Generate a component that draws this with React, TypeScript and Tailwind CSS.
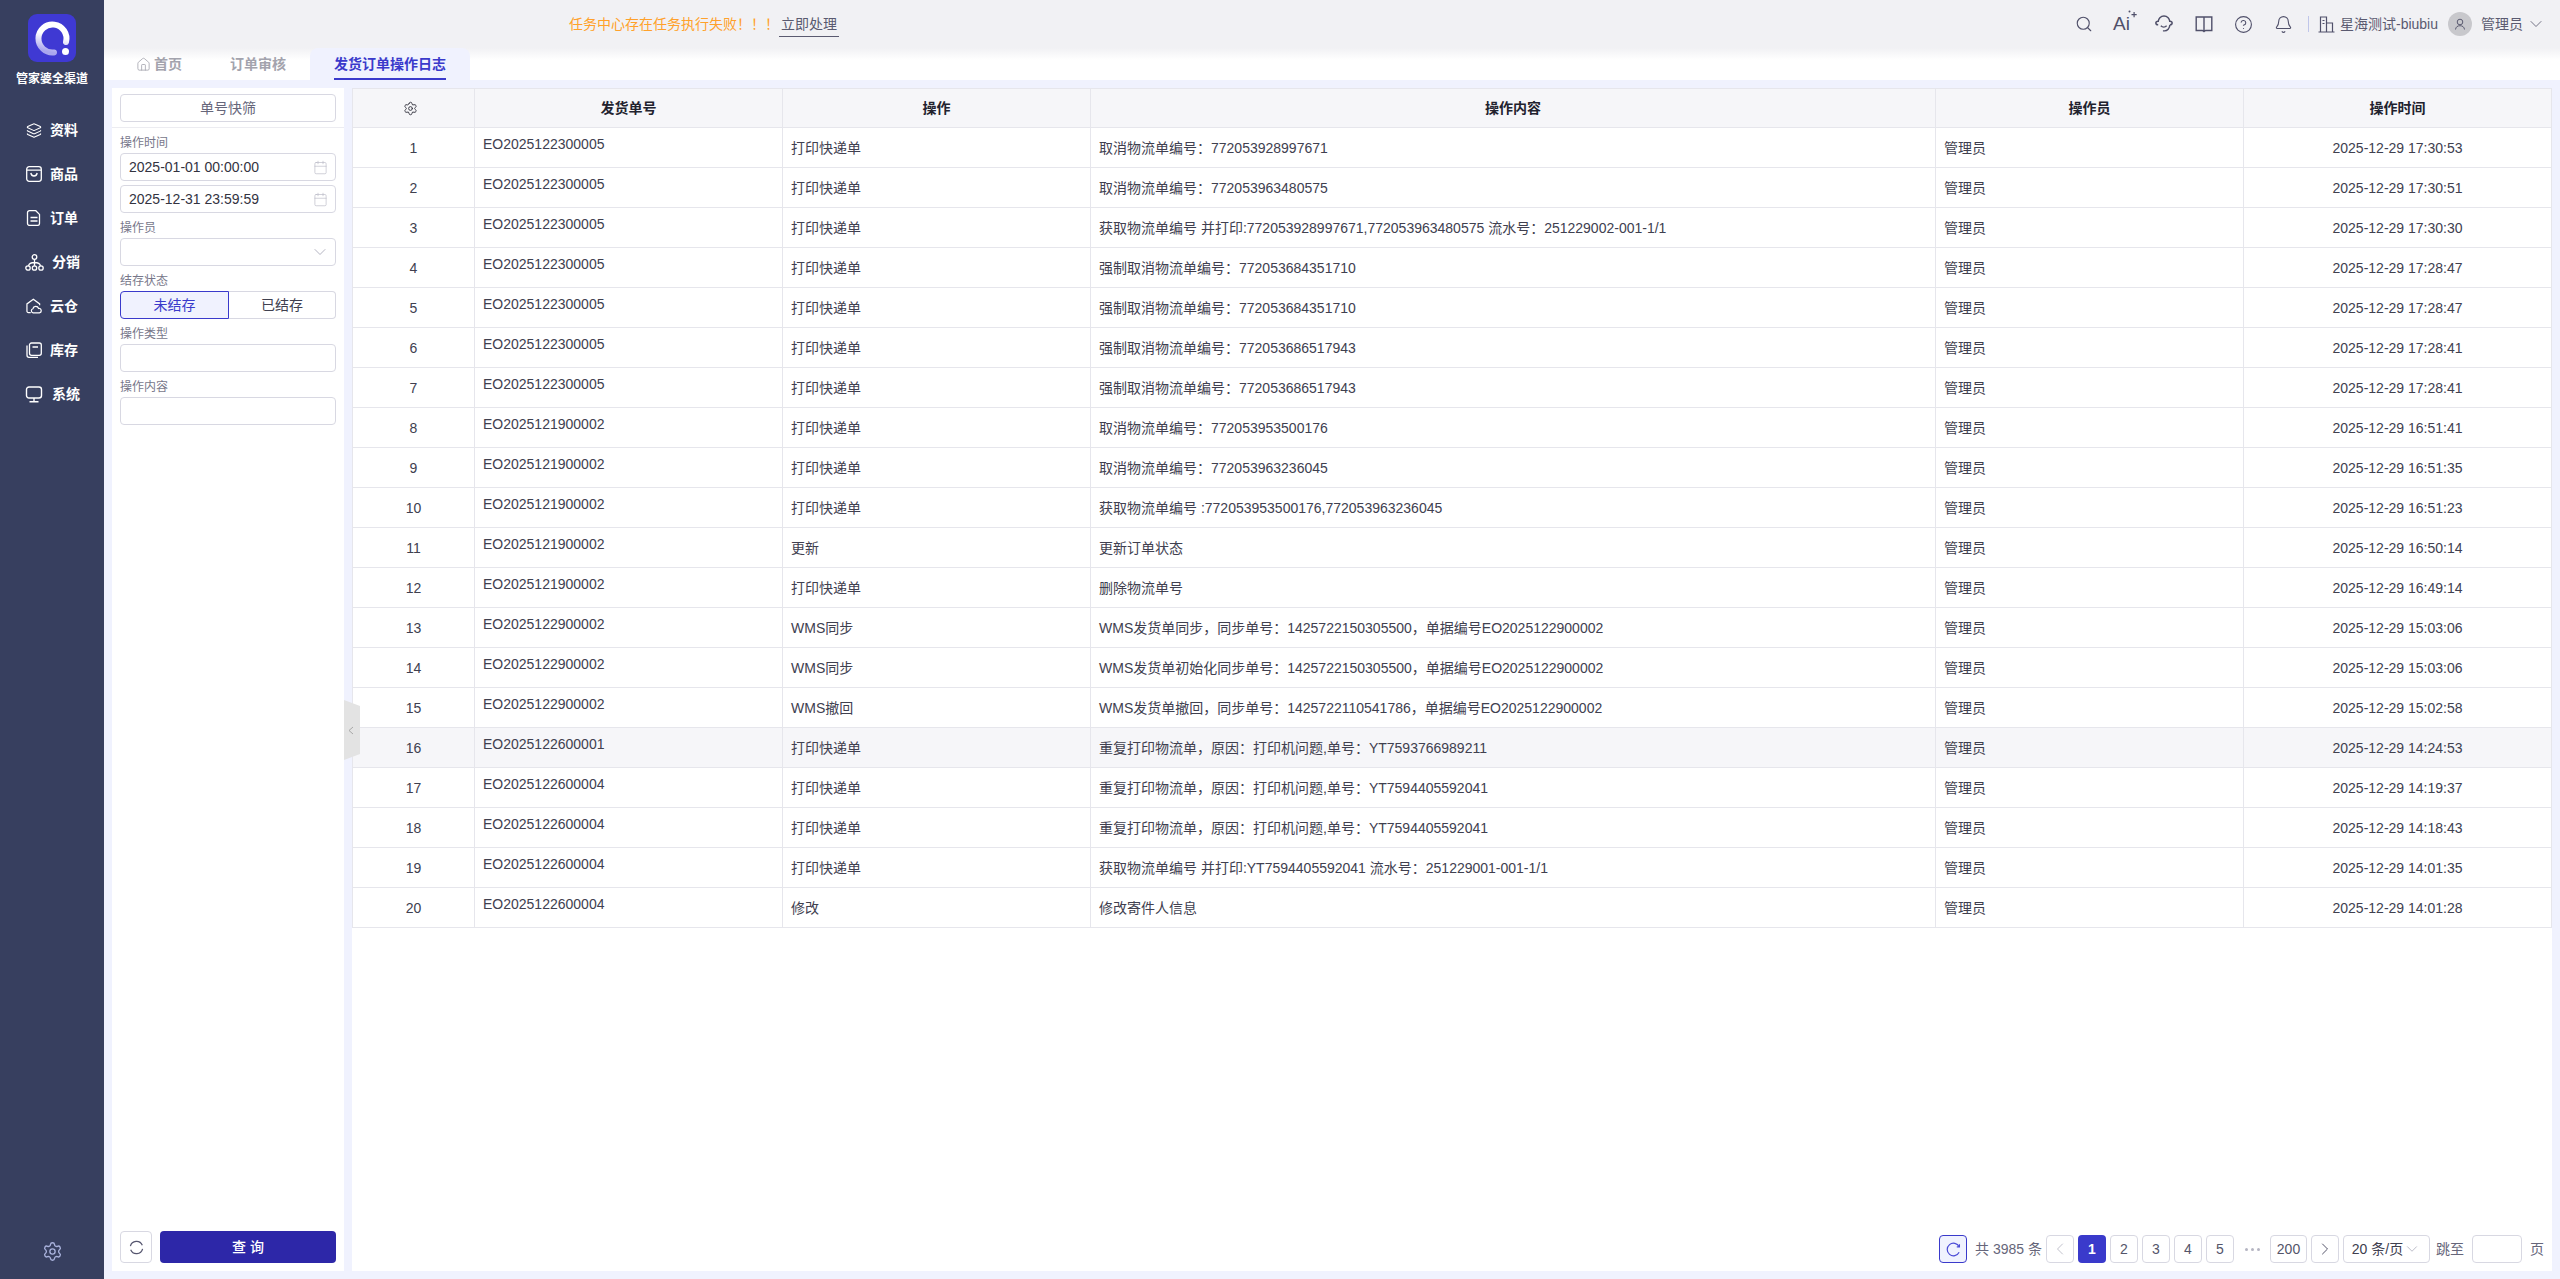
import { Bell, Calendar, ChevronDown, ChevronLeft, ChevronRight, CircleHelp, House, Layers, Search, Settings } from "lucide-react"

const menuItems = [
  { name: "资料", icon: "data" },
  { name: "商品", icon: "goods" },
  { name: "订单", icon: "order" },
  { name: "分销", icon: "dist" },
  { name: "云仓", icon: "cloud" },
  { name: "库存", icon: "stock" },
  { name: "系统", icon: "system" },
]

const rows = [
  ["EO2025122300005", "打印快递单", "取消物流单编号：772053928997671", "2025-12-29 17:30:53"],
  ["EO2025122300005", "打印快递单", "取消物流单编号：772053963480575", "2025-12-29 17:30:51"],
  ["EO2025122300005", "打印快递单", "获取物流单编号 并打印:772053928997671,772053963480575 流水号：251229002-001-1/1", "2025-12-29 17:30:30"],
  ["EO2025122300005", "打印快递单", "强制取消物流单编号：772053684351710", "2025-12-29 17:28:47"],
  ["EO2025122300005", "打印快递单", "强制取消物流单编号：772053684351710", "2025-12-29 17:28:47"],
  ["EO2025122300005", "打印快递单", "强制取消物流单编号：772053686517943", "2025-12-29 17:28:41"],
  ["EO2025122300005", "打印快递单", "强制取消物流单编号：772053686517943", "2025-12-29 17:28:41"],
  ["EO2025121900002", "打印快递单", "取消物流单编号：772053953500176", "2025-12-29 16:51:41"],
  ["EO2025121900002", "打印快递单", "取消物流单编号：772053963236045", "2025-12-29 16:51:35"],
  ["EO2025121900002", "打印快递单", "获取物流单编号 :772053953500176,772053963236045", "2025-12-29 16:51:23"],
  ["EO2025121900002", "更新", "更新订单状态", "2025-12-29 16:50:14"],
  ["EO2025121900002", "打印快递单", "删除物流单号", "2025-12-29 16:49:14"],
  ["EO2025122900002", "WMS同步", "WMS发货单同步，同步单号：1425722150305500，单据编号EO2025122900002", "2025-12-29 15:03:06"],
  ["EO2025122900002", "WMS同步", "WMS发货单初始化同步单号：1425722150305500，单据编号EO2025122900002", "2025-12-29 15:03:06"],
  ["EO2025122900002", "WMS撤回", "WMS发货单撤回，同步单号：1425722110541786，单据编号EO2025122900002", "2025-12-29 15:02:58"],
  ["EO2025122600001", "打印快递单", "重复打印物流单，原因：打印机问题,单号：YT7593766989211", "2025-12-29 14:24:53"],
  ["EO2025122600004", "打印快递单", "重复打印物流单，原因：打印机问题,单号：YT7594405592041", "2025-12-29 14:19:37"],
  ["EO2025122600004", "打印快递单", "重复打印物流单，原因：打印机问题,单号：YT7594405592041", "2025-12-29 14:18:43"],
  ["EO2025122600004", "打印快递单", "获取物流单编号 并打印:YT7594405592041 流水号：251229001-001-1/1", "2025-12-29 14:01:35"],
  ["EO2025122600004", "修改", "修改寄件人信息", "2025-12-29 14:01:28"],
]

function Logo() {
  return (
    <svg width="48" height="48" viewBox="0 0 48 48">
      <defs>
        <linearGradient id="ring" x1="0.7" y1="0.1" x2="0.5" y2="1">
          <stop offset="0.35" stopColor="#ffffff" />
          <stop offset="1" stopColor="#aaa6ee" />
        </linearGradient>
      </defs>
      <rect width="48" height="48" rx="9" fill="#3f39d3" />
      <path d="M38 28 A14 14 0 1 0 26 38.4" fill="none" stroke="url(#ring)" strokeWidth="6" strokeLinecap="round" />
      <circle cx="37.5" cy="37.5" r="3.5" fill="#fff" />
    </svg>
  )
}

function MenuIcon({ name }: { name: string }) {
  if (name === "data") return <Layers size={17} strokeWidth={1.6} />
  if (name === "goods")
    return (
      <svg width="16" height="16" viewBox="0 0 16 16" fill="none" stroke="currentColor" strokeWidth="1.3">
        <rect x="0.7" y="0.7" width="14.6" height="14.6" rx="2.5" />
        <path d="M1 4.2h14M4.8 7c.4 2 1.6 3 3.2 3s2.8-1 3.2-3" />
      </svg>
    )
  if (name === "order")
    return (
      <svg width="16" height="16" viewBox="0 0 16 16" fill="none" stroke="currentColor" strokeWidth="1.3">
        <path d="M3.5 .7h6.3l3.7 3.7v9a2 2 0 0 1-2 2H3.5a2 2 0 0 1-2-2V2.700a2 2 0 0 1 2-2Z" />
        <path d="M4.5 7.5h7M4.5 11h7" />
      </svg>
    )
  if (name === "dist")
    return (
      <svg width="19" height="17" viewBox="0 0 19 17" fill="none" stroke="currentColor" strokeWidth="1.3">
        <circle cx="9.5" cy="3" r="2.3" />
        <circle cx="3" cy="14" r="2.2" />
        <circle cx="9.5" cy="14" r="2.2" />
        <circle cx="16" cy="14" r="2.2" />
        <path d="M9.5 5.3v6.4M3.5 11.800c.5-2.500 2.500-3.300 6-3.300s5.500.8 6 3.300" />
      </svg>
    )
  if (name === "cloud")
    return (
      <svg width="17" height="16" viewBox="0 0 17 16" fill="none" stroke="currentColor" strokeWidth="1.3">
        <path d="M5 15H2.500a1.500 1.500 0 0 1-1.500-1.500V5.800L7.800 .8l6.700 5v1.500" />
        <path d="M7.500 15.200a2.200 2.200 0 0 1-.2-4.300 3.200 3.200 0 0 1 6.100-.3 2.300 2.300 0 0 1 .8 4.600Z" />
      </svg>
    )
  if (name === "stock")
    return (
      <svg width="16" height="16" viewBox="0 0 16 16" fill="none" stroke="currentColor" strokeWidth="1.3">
        <rect x="3.500" y="1" width="11.800" height="12.300" rx="2" />
        <path d="M6.500 5h5.500M1 3.500v9.800a2 2 0 0 0 2 2h9" />
      </svg>
    )
  return (
    <svg width="19" height="17" viewBox="0 0 19 17" fill="none" stroke="currentColor" strokeWidth="1.4">
      <rect x="1.500" y="1" width="15" height="11" rx="2.500" />
      <path d="M9 12v3.500M4.500 15.700h9" />
    </svg>
  )
}

function Sidebar() {
  return (
    <aside className="flex w-[104px] shrink-0 flex-col bg-[#373f5f] text-white">
      <div className="flex flex-col items-center pt-[14px]">
        <Logo />
        <div className="mt-[9px] text-[12px] leading-4 font-bold">管家婆全渠道</div>
      </div>
      <nav className="mt-[21px] flex flex-col">
        {menuItems.map((item) => (
          <div key={item.name} className="flex h-[44px] items-center">
            {item.icon === "dist" || item.icon === "system" ? (
              <div className="ml-[25px] flex w-[19px] justify-center"><MenuIcon name={item.icon} /></div>
            ) : (
              <div className="ml-[26px] flex w-[16px] justify-center"><MenuIcon name={item.icon} /></div>
            )}
            <span className="ml-[8px] text-[14px] leading-5 font-bold">{item.name}</span>
          </div>
        ))}
      </nav>
      <div className="mt-auto flex justify-center pb-[17px]">
        <Settings size={21} strokeWidth={1.5} className="text-[#aab3dd]" />
      </div>
    </aside>
  )
}

function TopBar() {
  return (
    <header className="flex h-[48px] shrink-0 items-center bg-[#f1f1f4] pl-[465px] text-[14px] leading-5 text-[#5a5a70]">
      <span className="text-[#ffa12b]">任务中心存在任务执行失败！！！</span>
      <span className="border-b border-[#5a5a70] px-[2px] pb-[2px] pt-[3px]">立即处理</span>
      <div className="ml-auto flex items-center pr-[17px]">
        <div className="flex w-[40px] justify-center"><Search size={18} strokeWidth={1.5} className="text-[#50506a]" /></div>
        <div className="flex w-[40px] justify-center text-[#50506a]">
          <span className="relative pr-[5px] text-[19px] leading-5">
            Ai
            <svg className="absolute -top-[4px] -right-[2px]" width="10" height="10" viewBox="0 0 10 10" fill="currentColor">
              <path d="M6.500 2h1.200v2h2v1.200h-2v2H6.500v-2h-2V4h2Z" />
              <circle cx="2.500" cy="1.500" r="1" />
            </svg>
          </span>
        </div>
        <div className="flex w-[40px] justify-center text-[#50506a]">
          <svg width="18" height="18" viewBox="0 0 17 17" fill="none" stroke="currentColor" strokeWidth="1.4">
            <path d="M3 6.500a5.500 5.500 0 0 1 11 0" />
            <path d="M3 5.800c-1.500 0-2.200 1-2.200 1.800s.7 1.700 2.200 1.700M14 5.800c1.500 0 2.200 1 2.200 1.800s-.7 1.700-2.200 1.700" />
            <path d="M14 9.500c0 3-2.500 5.500-5 5.500H7.500M5.500 10.200c1.500 1.500 4 1.500 5.500 0" />
          </svg>
        </div>
        <div className="flex w-[40px] justify-center text-[#50506a]">
          <svg width="18" height="17" viewBox="0 0 17 17" fill="none" stroke="currentColor" strokeWidth="1.4">
            <path d="M.7 1h15.600v13.500h-6c-.8 0-1.300.5-1.800 1-.5-.5-1-1-1.800-1h-6ZM8.500 1v14" />
          </svg>
        </div>
        <div className="flex w-[40px] justify-center"><CircleHelp size={19} strokeWidth={1.4} className="text-[#50506a]" /></div>
        <div className="flex w-[40px] justify-center"><Bell size={19} strokeWidth={1.4} className="text-[#50506a]" /></div>
        <div className="ml-[4px] h-[16px] w-px bg-[#c0c6ea]" />
        <svg className="ml-[9px] text-[#50506a]" width="17" height="17" viewBox="0 0 17 17" fill="none" stroke="currentColor" strokeWidth="1.2">
          <path d="M.5 16h16M2.500 16V1h6v15M8.500 7h6v9M4.500 4.500h2M4.500 7.500h2" />
        </svg>
        <span className="ml-[5px]">星海测试-biubiu</span>
        <div className="ml-[10px] flex h-[24px] w-[24px] items-center justify-center rounded-full bg-[#c8c8cc]">
          <svg width="12" height="12" viewBox="0 0 12 12" fill="none" stroke="#5a5a70" strokeWidth="1">
            <circle cx="6" cy="4" r="2.800" />
            <path d="M1.500 11.500c.3-2.500 2-3.800 4.500-3.800s4.200 1.300 4.500 3.800" />
          </svg>
        </div>
        <span className="ml-[9px]">管理员</span>
        <ChevronDown size={20} strokeWidth={1} className="ml-[3px] -mr-[3px]" />
      </div>
    </header>
  )
}

function TabBar() {
  return (
    <div className="flex h-[32px] shrink-0 bg-[linear-gradient(#f1f1f4,#ffffff_12px)] pl-[8px] text-[14px] leading-5 font-bold text-[#a3a3ad]">
      <div className="flex items-center gap-[3px] px-[24px]">
        <House size={15} strokeWidth={1.3} />
        <span>首页</span>
      </div>
      <div className="flex items-center px-[24px]">订单审核</div>
      <div className="flex rounded-t-[8px] bg-[#f0f2fe] px-[24px] text-[#3a3acb]">
        <div className="flex items-center border-b-2 border-[#3a3acb] pt-[2px]">发货订单操作日志</div>
      </div>
    </div>
  )
}

function Label({ text }: { text: string }) {
  return <div className="mb-[2px] text-[12px] leading-4 text-[#77778a]">{text}</div>
}

function DateInput({ value }: { value: string }) {
  return (
    <div className="flex h-[28px] items-center justify-between rounded-[4px] border border-[#d8d8e2] bg-white pl-[8px] pr-[7px] text-[14px] text-[#33333f]">
      <span>{value}</span>
      <Calendar size={15} strokeWidth={1} className="text-[#b5b5c2]" />
    </div>
  )
}

function FilterPanel() {
  return (
    <div className="relative flex w-[232px] shrink-0 flex-col bg-white">
      <div className="border-b border-[#ececf1] px-[8px] pb-[5px] pt-[6px]">
        <div className="flex h-[28px] items-center justify-center rounded-[4px] border border-[#d8d8e2] text-[14px] text-[#66667a]">单号快筛</div>
      </div>
      <div className="flex flex-col px-[8px] pt-[7px]">
        <Label text="操作时间" />
        <DateInput value="2025-01-01 00:00:00" />
        <div className="mt-[4px]"><DateInput value="2025-12-31 23:59:59" /></div>
        <div className="mt-[7px]"><Label text="操作员" /></div>
        <div className="flex h-[28px] items-center justify-end rounded-[4px] border border-[#d8d8e2] pr-[5px]">
          <ChevronDown size={20} strokeWidth={1} className="text-[#a5a5b5]" />
        </div>
        <div className="mt-[7px]"><Label text="结存状态" /></div>
        <div className="flex h-[28px] text-[14px]">
          <div className="flex w-[109px] items-center justify-center rounded-l-[4px] border border-[#3a3acb] bg-[#f0f2fe] text-[#3a3acb]">未结存</div>
          <div className="flex flex-1 items-center justify-center rounded-r-[4px] border border-l-0 border-[#d8d8e2] text-[#40404f]">已结存</div>
        </div>
        <div className="mt-[7px]"><Label text="操作类型" /></div>
        <div className="h-[28px] rounded-[4px] border border-[#d8d8e2]" />
        <div className="mt-[7px]"><Label text="操作内容" /></div>
        <div className="h-[28px] rounded-[4px] border border-[#d8d8e2]" />
      </div>
      <div className="mt-auto flex gap-[8px] px-[8px] pb-[8px]">
        <div className="flex h-[32px] w-[32px] items-center justify-center rounded-[4px] border border-[#d8d8e2]">
          <svg className="text-[#55556e]" width="15" height="15" viewBox="0 0 16 16" fill="none" stroke="currentColor" strokeWidth="1.3">
            <path d="M1.500 6.500A6.700 6.700 0 0 1 14.200 5.500M14.500 9.500A6.700 6.700 0 0 1 1.800 10.500" />
          </svg>
        </div>
        <div className="flex h-[32px] flex-1 items-center justify-center rounded-[4px] bg-[#2d27a8] text-[14px] font-medium text-white">查&nbsp;询</div>
      </div>
      <div className="absolute left-full top-[612px] z-10">
        <svg width="16" height="60" viewBox="0 0 16 60" className="block">
          <polygon points="0,0 16,6 16,54 0,60" fill="#e3e3e3" />
          <path d="M9 27l-4 3.500 4 3.500" fill="none" stroke="#a8a8a8" strokeWidth="1" />
        </svg>
      </div>
    </div>
  )
}

function LogTable() {
  const headCell = "border border-[#e6e6ec] bg-[#f6f6f9] text-center font-bold text-[#22222e]"
  const cell = "border border-[#e6e6ec] px-[8px]"
  return (
    <table className="w-full table-fixed border-collapse text-[14px] leading-5 text-[#40404f]">
      <colgroup>
        <col className="w-[122px]" />
        <col className="w-[308px]" />
        <col className="w-[308px]" />
        <col className="w-[845px]" />
        <col className="w-[308px]" />
        <col />
      </colgroup>
      <thead>
        <tr className="h-[39px]">
          <th className={headCell}>
            <Settings size={15} strokeWidth={1.5} className="mx-auto -translate-x-[3px] text-[#33333f]" />
          </th>
          <th className={headCell}>发货单号</th>
          <th className={headCell}>操作</th>
          <th className={headCell}>操作内容</th>
          <th className={headCell}>操作员</th>
          <th className={headCell}>操作时间</th>
        </tr>
      </thead>
      <tbody>
        {rows.map((row, i) => (
          <tr key={i} className={i === 15 ? "h-[40px] bg-[#f6f6f9]" : "h-[40px]"}>
            <td className={cell + " text-center"}>{i + 1}</td>
            <td className={cell + " pt-[6px] align-top"}>{row[0]}</td>
            <td className={cell}>{row[1]}</td>
            <td className={cell}>{row[2]}</td>
            <td className={cell}>管理员</td>
            <td className={cell + " text-center"}>{row[3]}</td>
          </tr>
        ))}
      </tbody>
    </table>
  )
}

function PageBtn({ children, active }: { children: React.ReactNode; active?: boolean }) {
  return (
    <div
      className={
        active
          ? "flex h-[28px] w-[28px] items-center justify-center rounded-[4px] bg-[#3a3acb] font-bold text-white"
          : "flex h-[28px] min-w-[28px] items-center justify-center rounded-[4px] border border-[#d8d8e2] px-[1px] text-[#55556a]"
      }
    >
      {children}
    </div>
  )
}

function Pagination() {
  return (
    <div className="mt-auto flex items-center justify-end pb-[8px] pr-[8px] text-[14px] leading-5 text-[#66667a]">
      <div className="flex h-[28px] w-[28px] items-center justify-center rounded-[4px] border border-[#3a3acb] bg-[#f0f2fe]">
        <svg className="text-[#4a4ad6]" width="15" height="15" viewBox="0 0 16 16" fill="none" stroke="currentColor" strokeWidth="1.3">
          <path d="M14 5A6.700 6.700 0 1 0 14 11" />
          <path d="M14.300 2.500V5.300h-2.800" />
        </svg>
      </div>
      <span className="ml-[8px] mr-[4px] whitespace-nowrap">共 3985 条</span>
      <div className="flex items-center gap-[4px]">
        <PageBtn><ChevronLeft size={20} strokeWidth={1} className="text-[#b5b5c2]" /></PageBtn>
        <PageBtn active>1</PageBtn>
        <PageBtn>2</PageBtn>
        <PageBtn>3</PageBtn>
        <PageBtn>4</PageBtn>
        <PageBtn>5</PageBtn>
        <div className="flex w-[28px] items-center justify-center gap-[3px]">
          <span className="h-[3px] w-[3px] rounded-full bg-[#b5b5c2]" />
          <span className="h-[3px] w-[3px] rounded-full bg-[#b5b5c2]" />
          <span className="h-[3px] w-[3px] rounded-full bg-[#b5b5c2]" />
        </div>
        <div className="flex h-[28px] w-[37px] items-center justify-center rounded-[4px] border border-[#d8d8e2] text-[#55556a]">200</div>
        <PageBtn><ChevronRight size={20} strokeWidth={1.2} /></PageBtn>
        <div className="flex h-[28px] w-[87px] items-center justify-center rounded-[4px] border border-[#d8d8e2] text-[#40404f]">
          20 条/页
          <ChevronDown size={18} strokeWidth={1} className="text-[#a5a5b5]" />
        </div>
      </div>
      <span className="ml-[6px]">跳至</span>
      <div className="mx-[8px] h-[28px] w-[50px] rounded-[4px] border border-[#d8d8e2]" />
      <span>页</span>
    </div>
  )
}

export default function App() {
  return (
    <div className="flex h-[1279px] w-full overflow-hidden bg-white [font-family:'Liberation_Sans','Noto_Sans_CJK_SC',sans-serif]">
      <Sidebar />
      <main className="flex min-w-0 flex-1 flex-col">
        <TopBar />
        <TabBar />
        <div className="flex min-h-0 flex-1 gap-[8px] bg-[#f0f2fe] p-[8px]">
          <FilterPanel />
          <section className="flex min-w-0 flex-1 flex-col bg-white">
            <LogTable />
            <Pagination />
          </section>
        </div>
      </main>
    </div>
  )
}
